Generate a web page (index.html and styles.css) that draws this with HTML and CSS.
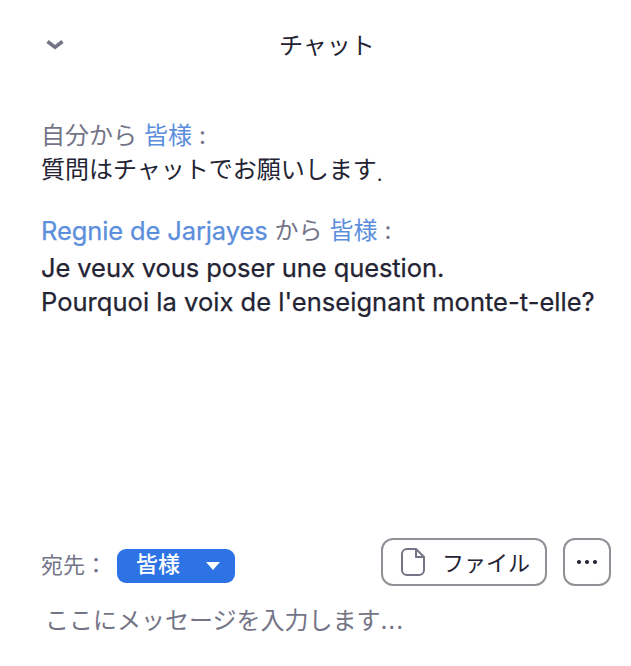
FILE: index.html
```html
<!DOCTYPE html>
<html lang="ja">
<head>
<meta charset="utf-8">
<title>チャット</title>
<link rel="stylesheet" href="styles.css">
</head>
<body>
<main class="chat">
  <header class="header">
    <svg class="chevron" width="18" height="12" viewBox="0 0 18 12"><path d="M1.5 2.5 9 8.2l7.5-5.7" /></svg>
    <h1 class="title">チャット</h1>
  </header>
  <section class="messages">
    <article class="message">
      <div class="sender"><span>自分から</span><span class="name">皆様</span><span>:</span></div>
      <p class="text">質問はチャットでお願いします<span class="stop">.</span></p>
    </article>
    <article class="message message-latin">
      <div class="sender"><span class="name latin">Regnie de Jarjayes</span><span>から</span><span class="name">皆様</span><span>:</span></div>
      <p class="latin first">Je veux vous poser une question.</p>
      <p class="latin second">Pourquoi la voix de l'enseignant monte-t-elle?</p>
    </article>
  </section>
  <footer class="composer">
    <div class="toolbar">
      <span class="to">宛先：</span>
      <button class="recipient"><span>皆様</span><svg width="14" height="8" viewBox="0 0 14 8"><path d="M0 0h14L7 8z" fill="#fff" /></svg></button>
      <button class="file"><svg width="26" height="30" viewBox="0 0 26 30"><path d="M7 2h9l8 8v13a5 5 0 0 1-5 5H7a5 5 0 0 1-5-5V7a5 5 0 0 1 5-5z" /><path d="M16 2v8h8" /></svg><span>ファイル</span></button>
      <button class="more"><svg width="22" height="6" viewBox="0 0 22 6"><circle cx="3" cy="3" r="2.1" /><circle cx="11" cy="3" r="2.1" /><circle cx="19" cy="3" r="2.1" /></svg></button>
    </div>
    <div class="placeholder">ここにメッセージを入力します<span class="dots">...</span></div>
  </footer>
</main>
</body>
</html>
```
FILE: styles.css
```css
* { box-sizing: border-box; }
body { margin: 0; background: #fff; }
.chat {
  display: flex;
  flex-direction: column;
  height: 666px;
  font-family: Inter, "Noto Sans CJK JP", sans-serif;
  font-size: 24px;
  color: #232333;
  white-space: nowrap;
  overflow: hidden;
}
h1, p { margin: 0; font-weight: 400; }
button { background: none; font: inherit; color: inherit; padding: 0; margin: 0; }
svg { display: block; flex: none; }
.header { display: flex; align-items: center; height: 92px; padding-left: 46px; }
.chevron { fill: none; stroke: #747487; stroke-width: 3.6; margin-top: -2px; }
.title { font-size: 24px; line-height: 36px; margin-left: 215px; }
.messages { flex: 1; padding: 26px 0 0 41px; }
.message-latin { margin-top: 26px; }
.sender { display: flex; gap: 7px; height: 35px; line-height: 35px; color: #747487; }
.name { color: #5b8edc; }
.text { height: 34px; line-height: 34px; }
.stop { display: inline-block; line-height: 1; font-size: 20px; transform: translateY(3px); }
.latin { font-size: 25.5px; -webkit-text-stroke: 0.25px currentColor; }
.sender .latin { letter-spacing: -0.12px; }
.first { height: 38px; line-height: 40px; letter-spacing: -0.08px; }
.second { height: 34px; line-height: 32px; letter-spacing: 0.03px; }
.composer { height: 130px; }
.toolbar { display: flex; align-items: center; height: 52px; padding-left: 41px; }
.to { width: 76px; padding-top: 2px; font-size: 22px; color: #747487; }
.recipient {
  display: flex;
  align-items: center;
  width: 118px;
  height: 34px;
  margin-top: 8px;
  padding-left: 19px;
  gap: 26px;
  border: 0;
  border-radius: 9px;
  background: #2d73e5;
  color: #fff;
  font-size: 22px;
  font-weight: 500;
}
.recipient span { line-height: 28px; margin-top: -5px; }
.file {
  display: flex;
  align-items: center;
  width: 166px;
  height: 48px;
  margin-left: 146px;
  padding-left: 17px;
  gap: 16px;
  border: 2px solid #909096;
  border-radius: 12px;
  font-size: 22px;
}
.file span { margin-top: -2px; }
.file svg { fill: none; stroke: #747487; stroke-width: 2; stroke-linejoin: round; }
.more {
  display: flex;
  align-items: center;
  justify-content: center;
  width: 48px;
  height: 48px;
  margin-left: 16px;
  border: 2px solid #909096;
  border-radius: 12px;
}
.more svg { fill: #232333; }
.placeholder { height: 36px; line-height: 36px; margin-top: 15px; padding-left: 45px; color: #747487; }
.dots { letter-spacing: 0.9px; }
```
